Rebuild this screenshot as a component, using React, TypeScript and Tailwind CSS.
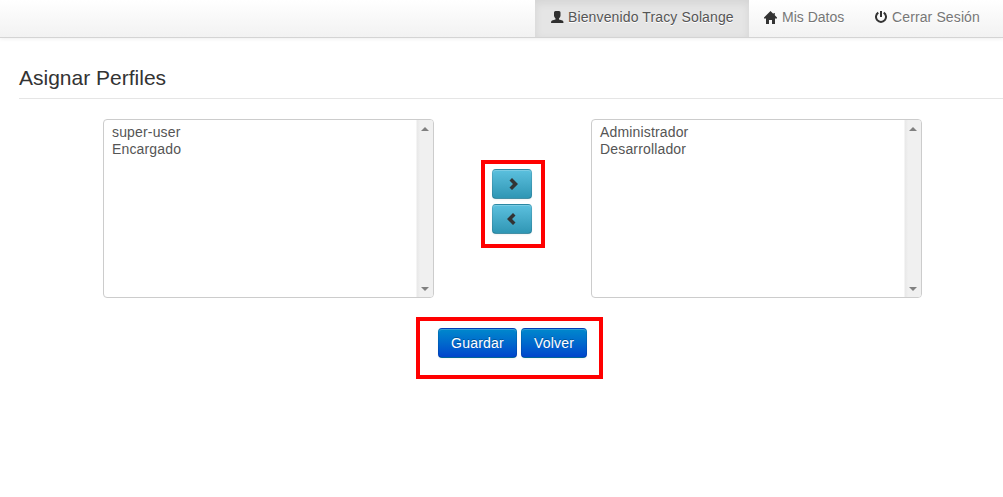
import type { ReactNode } from "react";

function UserIcon() {
  return (
    <svg width="13" height="12" viewBox="0 0 13 12" fill="#2f2f2f" className="mr-1 shrink-0">
      <path d="M4.500 0H8Q9.500 0 9.500 1.500V4.800Q9.500 5.800 8 7.500V8.500L11.500 9.600Q12.500 10 12.500 12H0Q0 10 1 9.600L4.500 8.500V7.500Q3 5.800 3 4.800V1.500Q3 0 4.500 0Z" />
    </svg>
  );
}

function HomeIcon() {
  return (
    <svg width="13" height="13" viewBox="0 0 13 13" fill="#333" className="mr-[5px] shrink-0">
      <path d="M6.500 0L0 6.500V7.500H2V13H5V9H8V13H11V7.500H13V6.500L10.800 4.300V2H9.500V3Z" />
    </svg>
  );
}

function PowerIcon() {
  return (
    <svg width="12" height="12" viewBox="0 0 12 12" fill="none" stroke="#333" strokeWidth="2" className="mr-[5px] shrink-0">
      <path d="M3.300 1.700A5 5 0 1 0 8.700 1.700" />
      <path d="M6 0V6" />
    </svg>
  );
}

function Chevron({ left = false }: { left?: boolean }) {
  return (
    <svg
      width="9"
      height="12"
      viewBox="0 0 9 12"
      fill="#333"
      className={left ? "mr-[2px] shrink-0" : "ml-[2px] shrink-0"}
    >
      <path
        d={
          left
            ? "M6 0L8.500 2.500L5 6L8.500 9.500L6 12L0 6Z"
            : "M3 0L0.500 2.500L4 6L0.500 9.500L3 12L9 6Z"
        }
      />
    </svg>
  );
}

function ListBox({ items }: { items: string[] }) {
  return (
    <div className="flex h-[179px] w-[331px] overflow-hidden rounded-[4px] border border-[#ccc] bg-white">
      <ul className="flex-1 pt-1 pl-2 text-[14px] leading-[17px] tracking-[0.16px] text-[#555]">
        {items.map((item) => (
          <li key={item}>{item}</li>
        ))}
      </ul>
      <div className="flex w-[17px] flex-col items-center justify-between border-l border-[#f4f4f4] bg-linear-to-r from-[#e8e8e8] to-[#f0f0f0] to-20% pt-[7px] pb-[6px]">
        <svg width="8" height="4" viewBox="0 0 8 4" fill="#808080">
          <path d="M4 0L8 4H0Z" />
        </svg>
        <svg width="8" height="4" viewBox="0 0 8 4" fill="#808080">
          <path d="M0 0H8L4 4Z" />
        </svg>
      </div>
    </div>
  );
}

const buttonBase =
  "flex h-[30px] items-center justify-center rounded-[4px] border border-black/10 border-b-black/25 shadow-[inset_0_1px_0_rgba(255,255,255,0.2),0_1px_2px_rgba(0,0,0,0.05)]";

function MoveButton({ left = false, label }: { left?: boolean; label: string }) {
  return (
    <button
      aria-label={label}
      className={`${buttonBase} w-10 bg-linear-to-b from-[#5bc0de] to-[#2f96b4]`}
    >
      <Chevron left={left} />
    </button>
  );
}

function PrimaryButton({ className, children }: { className: string; children: ReactNode }) {
  return (
    <button
      className={`${buttonBase} bg-linear-to-b from-[#0088cc] to-[#0044cc] text-[14px] leading-5 tracking-[0.2px] text-white [text-shadow:0_-1px_0_rgba(0,0,0,0.25)] ${className}`}
    >
      {children}
    </button>
  );
}

export default function App() {
  return (
    <div className="h-[497px] w-[1003px] overflow-hidden bg-white font-['Liberation_Sans',Arial,sans-serif] text-[#333]">
      <nav className="flex h-[38px] justify-end border-b border-[#d4d4d4] bg-linear-to-b from-white to-[#f2f2f2] pr-2 text-[14px] leading-5 text-[#777] shadow-[0_1px_4px_rgba(0,0,0,0.065)] [text-shadow:0_1px_0_#fff]">
        <a className="flex w-[214px] items-center bg-[#e5e5e5] pb-[3px] pl-4 tracking-[0.13px] whitespace-nowrap text-[#555] shadow-[inset_0_3px_8px_rgba(0,0,0,0.08)]">
          <UserIcon />
          Bienvenido Tracy Solange
        </a>
        <a className="flex w-[111px] items-center pb-[3px] pl-[15px] whitespace-nowrap">
          <HomeIcon />
          Mis Datos
        </a>
        <a className="flex w-[135px] items-center pb-[3px] pl-[15px] tracking-[0.12px] whitespace-nowrap">
          <PowerIcon />
          Cerrar Sesión
        </a>
      </nav>

      <main className="pl-[19px]">
        <h1 className="h-[61px] border-b border-[#e5e5e5] pt-5 text-[21px] leading-10">Asignar Perfiles</h1>

        <div className="flex items-start pt-5 pl-[84px]">
          <ListBox items={["super-user", "Encargado"]} />
          <div className="mt-[41px] mr-[46px] ml-[47px] flex h-[88px] w-16 flex-col gap-[5px] border-4 border-[#ff0000] pt-[5px] pl-[7px]">
            <MoveButton label="Agregar" />
            <MoveButton left label="Quitar" />
          </div>
          <ListBox items={["Administrador", "Desarrollador"]} />
        </div>

        <div className="mt-[19px] ml-[397px] flex h-[62px] w-[187px] gap-1 border-4 border-[#ff0000] pt-[7px] pl-[18px]">
          <PrimaryButton className="w-[79px]">Guardar</PrimaryButton>
          <PrimaryButton className="w-[66px]">Volver</PrimaryButton>
        </div>
      </main>
    </div>
  );
}
